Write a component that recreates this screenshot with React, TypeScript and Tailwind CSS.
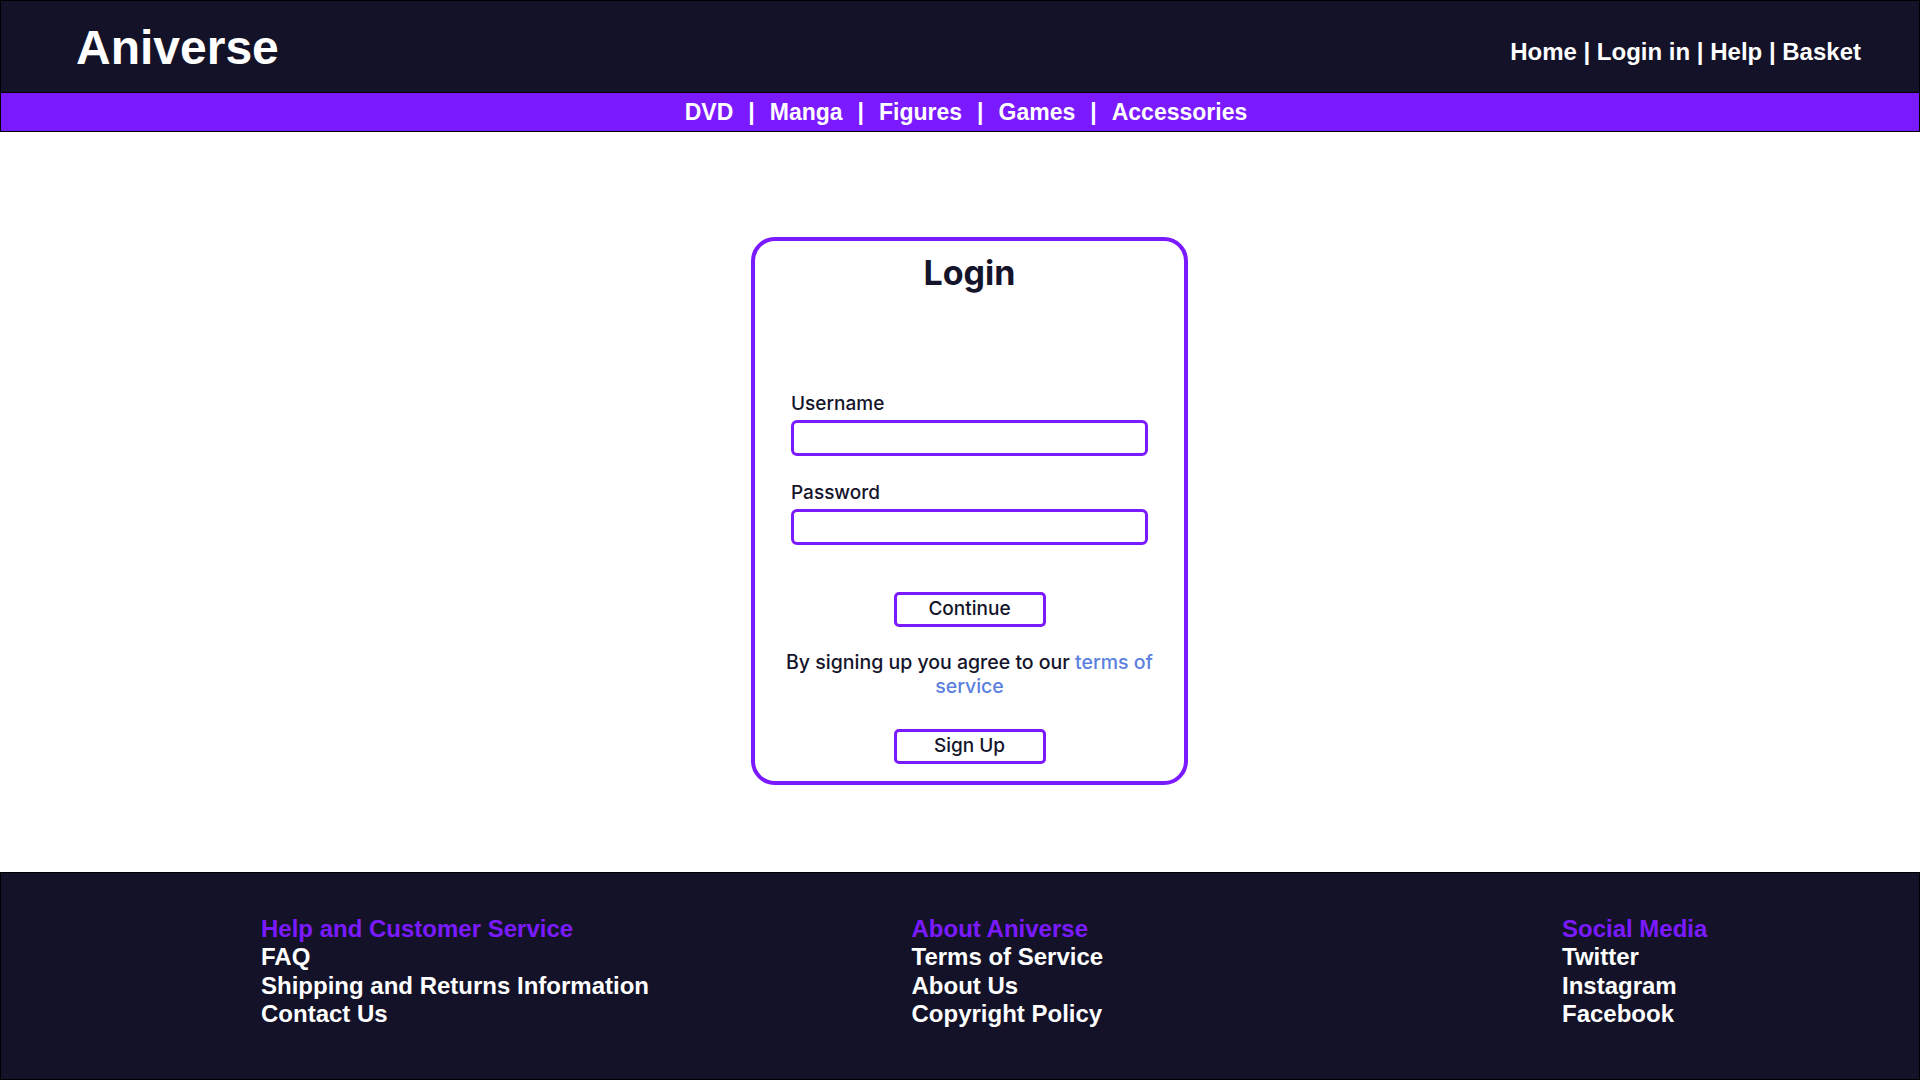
const NAVY = "bg-[#131228]";

/* ─── Header ─── */

function Header() {
  return (
    <header
      className={`flex h-[93px] items-start justify-between border border-black ${NAVY} font-['Liberation_Sans',Arial,sans-serif] font-bold text-white`}
    >
      <div className="mt-[11px] pl-[75px] text-[48px] leading-normal">Aniverse</div>
      <nav className="mt-[33px] pr-[58px] text-[24px] leading-normal">
        Home | Login in | Help | Basket
      </nav>
    </header>
  );
}

/* ─── CategoryBar ─── */

const CATEGORIES = ["DVD", "Manga", "Figures", "Games", "Accessories"];

function CategoryBar() {
  return (
    <nav className="flex h-[39px] items-center justify-center border-x border-b border-black bg-[#7b1aff] pl-[12px] font-['Liberation_Sans',Arial,sans-serif] text-[23px] font-bold leading-normal text-white">
      {CATEGORIES.map((c, i) => (
        <span key={c} className="flex items-center">
          {i > 0 && <span className="mx-[15px]">|</span>}
          {c}
        </span>
      ))}
    </nav>
  );
}

/* ─── LoginCard ─── */

function Field({ label, type }: { label: string; type: string }) {
  return (
    <div className="flex flex-col">
      <label className="text-[19px] font-medium leading-[24px] text-[#14142b]">{label}</label>
      <input
        type={type}
        className="mt-[4px] h-[36px] w-full rounded-[6px] border-[3px] border-[#7b1aff] bg-white px-2 outline-none"
      />
    </div>
  );
}

function OutlineButton({ children }: { children: string }) {
  return (
    <button
      type="button"
      className="mx-auto flex h-[35px] w-[152px] items-center justify-center rounded-[5px] border-[3px] border-[#7b1aff] bg-white text-[19px] font-medium text-[#14142b]"
    >
      {children}
    </button>
  );
}

function LoginCard() {
  return (
    <div className="flex h-[548px] w-[437px] flex-col rounded-[24px] border-[4px] border-[#7b1aff] bg-white px-[36px] pt-[12px] font-['Inter',sans-serif]">
      <h1 className="text-center text-[34px] font-bold leading-[40px] text-[#14142b]">Login</h1>
      <div className="mt-[99px]">
        <Field label="Username" type="text" />
      </div>
      <div className="mt-[25px]">
        <Field label="Password" type="password" />
      </div>
      <div className="mt-[47px]">
        <OutlineButton>Continue</OutlineButton>
      </div>
      <p className="mx-[-20px] mt-[23px] text-center text-[19.5px] font-medium leading-[24px] text-[#14142b]">
        By signing up you agree to our <span className="text-[#5b80de]">terms of</span>
        <br />
        <span className="text-[#5b80de]">service</span>
      </p>
      <div className="mt-[31px]">
        <OutlineButton>Sign Up</OutlineButton>
      </div>
    </div>
  );
}

/* ─── Footer ─── */

const FOOTER_COLUMNS = [
  { title: "Help and Customer Service", links: ["FAQ", "Shipping and Returns Information", "Contact Us"] },
  { title: "About Aniverse", links: ["Terms of Service", "About Us", "Copyright Policy"] },
  { title: "Social Media", links: ["Twitter", "Instagram", "Facebook"] },
];

function Footer() {
  return (
    <footer
      className={`flex h-[208px] border border-black ${NAVY} pl-[260px] pt-[42px] font-['Liberation_Sans',Arial,sans-serif] text-[24px] font-bold leading-[28.3px] text-white`}
    >
      {FOOTER_COLUMNS.map((col) => (
        <div key={col.title} className="flex w-[650.5px] shrink-0 flex-col">
          <span className="text-[#7b1aff]">{col.title}</span>
          {col.links.map((l) => (
            <span key={l}>{l}</span>
          ))}
        </div>
      ))}
    </footer>
  );
}

export default function App() {
  return (
    <div className="flex h-[1080px] w-[1920px] flex-col overflow-hidden bg-white">
      <Header />
      <CategoryBar />
      <main className="flex h-[740px] shrink-0 justify-center pl-[19px] pt-[105px]">
        <LoginCard />
      </main>
      <Footer />
    </div>
  );
}
